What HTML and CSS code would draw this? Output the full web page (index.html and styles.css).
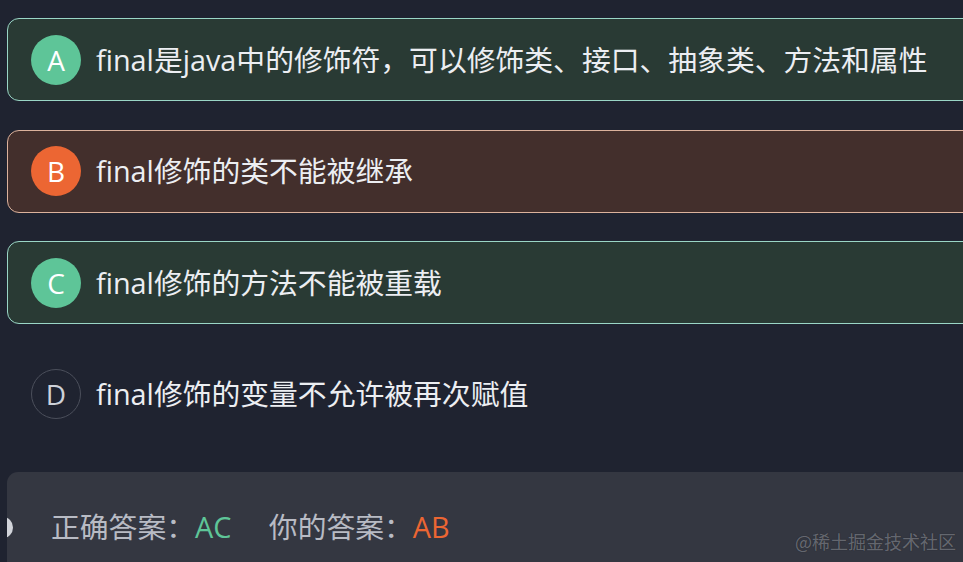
FILE: index.html
```html
<!DOCTYPE html>
<html lang="zh-CN">
<head>
<meta charset="utf-8">
<title>Quiz</title>
<link rel="stylesheet" href="styles.css">
</head>
<body>
<div class="page">
  <div class="options">
    <div class="option correct">
      <span class="badge">A</span>
      <span class="label">final是java中的修饰符，可以修饰类、接口、抽象类、方法和属性</span>
    </div>
    <div class="option wrong">
      <span class="badge">B</span>
      <span class="label">final修饰的类不能被继承</span>
    </div>
    <div class="option correct">
      <span class="badge">C</span>
      <span class="label">final修饰的方法不能被重载</span>
    </div>
    <div class="option plain">
      <span class="badge">D</span>
      <span class="label">final修饰的变量不允许被再次赋值</span>
    </div>
  </div>
  <div class="result">
    <span class="dot"></span>
    <span class="key">正确答案：</span><span class="val ok">AC</span>
    <span class="key mine">你的答案：</span><span class="val bad">AB</span>
  </div>
  <div class="watermark">@稀土掘金技术社区</div>
</div>
</body>
</html>
```
FILE: styles.css
```css
html, body {
  margin: 0;
  padding: 0;
  background: #1f2330;
  overflow: hidden;
}
.page {
  position: relative;
  width: 963px;
  height: 562px;
  overflow: hidden;
  padding: 18px 0 0 7px;
  box-sizing: border-box;
  font-family: "Open Sans", "Noto Sans CJK SC", sans-serif;
  color: #eceef2;
}
.options {
  display: flex;
  flex-direction: column;
  gap: 28.5px;
  margin-right: -30px;
}
.option {
  display: flex;
  align-items: center;
  gap: 15px;
  height: 83px;
  box-sizing: border-box;
  padding: 0 0 0 23px;
  border: 1px solid transparent;
  border-radius: 12px;
}
.option.correct {
  background: #293a34;
  border-color: #9ad6c6;
}
.option.wrong {
  background: #432f2c;
  border-color: #dcb29c;
}
.badge {
  flex: none;
  width: 50px;
  height: 50px;
  border-radius: 50%;
  display: flex;
  align-items: center;
  justify-content: center;
  font-size: 28px;
  color: #ffffff;
  box-sizing: border-box;
}
.correct .badge { background: #5ec598; }
.wrong .badge { background: #ec6633; }
.plain .badge {
  border: 1px solid #4b4f5b;
  color: #cdd1d9;
}
.label {
  font-size: 28.8px;
  line-height: 40px;
  white-space: nowrap;
}
.result {
  position: relative;
  margin-top: 36.5px;
  height: 120px;
  background: #343741;
  border-radius: 11px 0 0 0;
  padding: 35px 0 0 44px;
  box-sizing: border-box;
  overflow: hidden;
  font-size: 28.8px;
  line-height: 40px;
  color: #b8bbc4;
  white-space: nowrap;
}
.dot {
  position: absolute;
  left: -14px;
  top: 45px;
  width: 20px;
  height: 21px;
  border-radius: 50%;
  background: #d2d4da;
}
.mine { margin-left: 30px; }
.val.ok { color: #5ec598; }
.val.bad { color: #ec6633; }
.watermark {
  position: absolute;
  left: 795px;
  top: 529px;
  font-family: "Noto Sans CJK SC", sans-serif;
  font-size: 18px;
  line-height: 24px;
  color: rgba(160, 163, 172, 0.55);
  text-shadow: 0 0 1px rgba(0,0,0,0.4);
  white-space: nowrap;
}
```
